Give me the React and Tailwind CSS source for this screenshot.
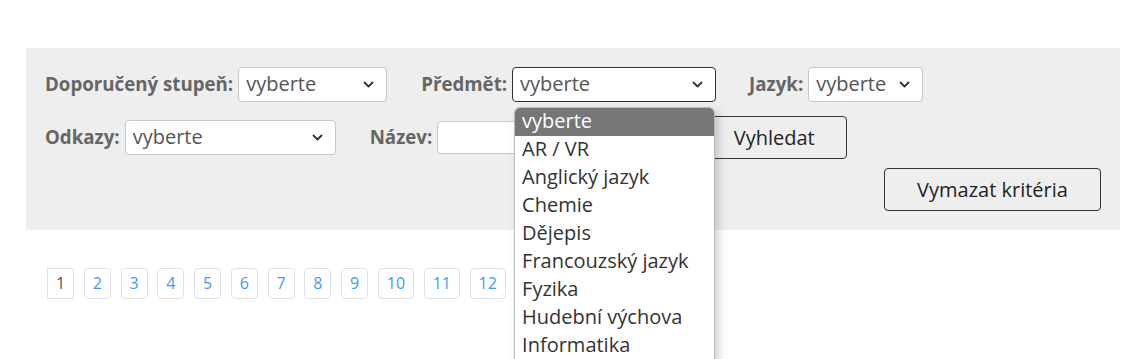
import React from 'react';

const Chevron = () => (
    <svg width="11" height="7" viewBox="0 0 11 7" className="shrink-0">
        <path d="M1.5 1.5 L5.5 5.5 L9.5 1.5" fill="none" stroke="#333" strokeWidth="1.8" strokeLinecap="round" strokeLinejoin="round" />
    </svg>
);

const FakeSelect = ({ width, focused }) => (
    <div
        className={`flex items-center justify-between h-[35px] pl-[7px] pr-[12px] bg-white rounded-[4px] border text-[20px] text-[#555] ${width} ${focused ? 'border-[#333]' : 'border-[#c8c8c8]'}`}
    >
        <span className="leading-none -mt-[2px]">vyberte</span>
        <Chevron />
    </div>
);

const Label = ({ children }) => (
    <span className="text-[18.7px] font-bold text-[#666] mr-[5px]">{children}</span>
);

const subjects = [
    'vyberte',
    'AR / VR',
    'Anglický jazyk',
    'Chemie',
    'Dějepis',
    'Francouzský jazyk',
    'Fyzika',
    'Hudební výchova',
    'Informatika',
];

const pages = ['1', '2', '3', '4', '5', '6', '7', '8', '9', '10', '11', '12'];

export default function App() {
    return (
        <div className="h-[359px] overflow-hidden bg-white font-['Open_Sans',sans-serif] pt-[48px]">
            {/* Filter panel */}
            <div className="ml-[26px] w-[1094px] bg-[#eeeeee] px-[19px] pt-[19px] pb-[19px]">
                <div className="flex items-center">
                    <Label>Doporučený stupeň:</Label>
                    <FakeSelect width="w-[149px]" />
                    <div className="ml-[34px] flex items-center">
                        <Label>Předmět:</Label>
                        <div className="relative">
                            <FakeSelect width="w-[204px]" focused />
                            {/* Open dropdown */}
                            <div className="absolute left-[2px] top-[40px] w-[201px] h-[260px] z-10 bg-white border border-[#bbb] rounded-t-[6px] overflow-hidden shadow-[4px_4px_10px_rgba(0,0,0,0.18)]">
                                {subjects.map((s, i) => (
                                    <div
                                        key={s}
                                        className={`px-[7px] h-[28px] leading-[26px] text-[20px] whitespace-nowrap ${i === 0 ? 'bg-[#767676] text-white' : 'text-[#333]'}`}
                                    >
                                        {s}
                                    </div>
                                ))}
                            </div>
                        </div>
                    </div>
                    <div className="ml-[33px] flex items-center">
                        <Label>Jazyk:</Label>
                        <FakeSelect width="w-[115px]" />
                    </div>
                </div>

                <div className="flex items-center mt-[14px] h-[43px]">
                    <Label>Odkazy:</Label>
                    <FakeSelect width="w-[211px]" />
                    <div className="ml-[34px] flex items-center">
                        <Label>Název:</Label>
                        <div className="w-[260px] h-[33px] bg-white border border-[#c8c8c8] rounded-[4px]" />
                    </div>
                    <button className="ml-[4px] h-[43px] w-[146px] border border-[#333] rounded-[4px] text-[20px] text-[#222] bg-transparent">
                        Vyhledat
                    </button>
                </div>

                <div className="flex justify-end mt-[9px]">
                    <button className="h-[43px] w-[217px] border border-[#333] rounded-[4px] text-[20px] text-[#222] bg-transparent">
                        Vymazat kritéria
                    </button>
                </div>
            </div>

            {/* Pagination */}
            <div className="flex gap-[9.6px] ml-[47px] mt-[38px]">
                {pages.map((p, i) => (
                    <div
                        key={p}
                        className={`h-[31px] px-[8px] border border-[#dee2e6] text-[16px] leading-[29px] ${i === 0 ? 'text-[#555]' : 'rounded-[4px] text-[#3d9bf5]'}`}
                    >
                        {p}
                    </div>
                ))}
            </div>
        </div>
    );
}
